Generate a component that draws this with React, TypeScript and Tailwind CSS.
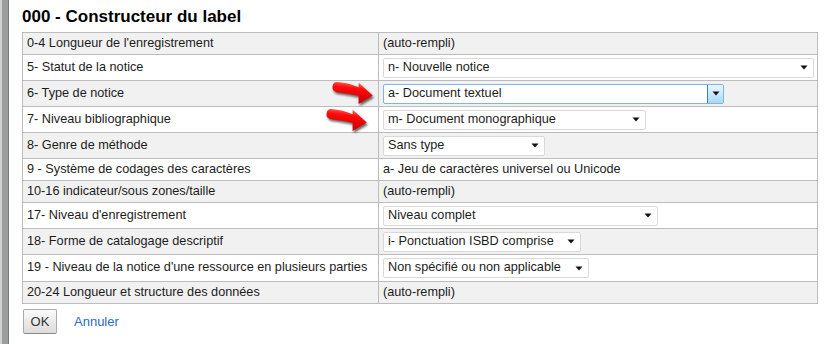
import React from "react";

type Row = {
  label: string;
  value?: string;
  select?: { text: string; width: string; focused?: boolean };
  arrow?: "a" | "b";
};

const rows: Row[] = [
  { label: "0-4 Longueur de l'enregistrement", value: "(auto-rempli)" },
  { label: "5- Statut de la notice", select: { text: "n- Nouvelle notice", width: "w-[431px]" } },
  { label: "6- Type de notice", select: { text: "a- Document textuel", width: "w-[341px]", focused: true }, arrow: "a" },
  { label: "7- Niveau bibliographique", select: { text: "m- Document monographique", width: "w-[263px]" }, arrow: "b" },
  { label: "8- Genre de méthode", select: { text: "Sans type", width: "w-[162px]" } },
  { label: "9 - Système de codages des caractères", value: "a- Jeu de caractères universel ou Unicode" },
  { label: "10-16 indicateur/sous zones/taille", value: "(auto-rempli)" },
  { label: "17- Niveau d'enregistrement", select: { text: "Niveau complet", width: "w-[275px]" } },
  { label: "18- Forme de catalogage descriptif", select: { text: "i- Ponctuation ISBD comprise", width: "w-[198px]" } },
  { label: "19 - Niveau de la notice d'une ressource en plusieurs parties", select: { text: "Non spécifié ou non applicable", width: "w-[206px]" } },
  { label: "20-24 Longueur et structure des données", value: "(auto-rempli)" },
];

function Caret() {
  return (
    <svg width="8" height="5" viewBox="0 0 8 5">
      <path d="M0.5 0.5 H7.5 L4 4.5 Z" fill="#111" />
    </svg>
  );
}

function Select({ text, width, focused }: { text: string; width: string; focused?: boolean }) {
  if (focused) {
    return (
      <div className={`${width} h-[20px] flex items-center bg-white border border-[#7eb4ea] rounded-[2px]`}>
        <span className="flex-1 pl-[4px] truncate">{text}</span>
        <div className="w-[16px] h-full flex items-center justify-center border-l border-[#3c7fb1] bg-gradient-to-b from-[#eaf6fd] to-[#a7d9f5] rounded-r-[1px]">
          <Caret />
        </div>
      </div>
    );
  }
  return (
    <div className={`${width} h-[20px] flex items-center bg-white border border-[#d9d9d9] rounded-[2px]`}>
      <span className="flex-1 pl-[4px] truncate">{text}</span>
      <div className="w-[16px] flex items-center justify-center pr-[2px]">
        <Caret />
      </div>
    </div>
  );
}

// red pointer arrow drawn on the screenshot
function RedArrow({ id }: { id: string }) {
  const d =
    "M4,2 C12,1.5 20,2.8 26,4.5 L25.5,0 L41,11 L28,21 L27,13 C20,12 12,12 5,12 Q0,11.5 0,7 Q0,2.5 4,2 Z";
  return (
    <svg width="46" height="27" viewBox="0 0 46 27">
      <defs>
        <linearGradient id={`g-${id}`} x1="0" y1="0" x2="0" y2="1">
          <stop offset="0" stopColor="#ff6a5a" />
          <stop offset="0.3" stopColor="#ff0a0a" />
          <stop offset="1" stopColor="#c40000" />
        </linearGradient>
        <filter id={`f-${id}`} x="-20%" y="-20%" width="140%" height="160%">
          <feGaussianBlur stdDeviation="1.1" />
        </filter>
      </defs>
      <g transform="translate(1 1) rotate(7 20 10)">
        <path d={d} transform="translate(1.5 2)" fill="#000" opacity="0.6" filter={`url(#f-${id})`} />
        <path d={d} fill={`url(#g-${id})`} />
      </g>
    </svg>
  );
}

export default function App() {
  return (
    <div className="w-[833px] h-[344px] flex bg-white text-[#1c1c1c] font-['Liberation_Sans',Arial,sans-serif] overflow-hidden">
      {/* window frame edge */}
      <div className="w-[2px] bg-[#d0d0d0]" />
      <div className="w-[6px] bg-[#9d9d9d]" />
      <div className="w-[1px] bg-[#6f7c84]" />

      <div className="pl-[13px] pt-[7px] flex flex-col">
        <div className="h-[20px] leading-[20px] text-[17px] font-bold text-black">
          000 - Constructeur du label
        </div>

        <table className="mt-[5px] w-[796px] table-fixed border border-[#bcbcbc] text-[12.7px]">
          <colgroup>
            <col className="w-[356px]" />
            <col />
          </colgroup>
          <tbody>
            {rows.map((r, i) => (
              <tr
                key={i}
                className={`${i % 2 === 0 ? "bg-[#f1f1f1]" : "bg-white"} ${r.select ? (i === 9 ? "h-[27px]" : "h-[26px]") : "h-[22px]"}`}
              >
                <td className="relative border border-[#bcbcbc] px-[4px] align-middle whitespace-nowrap">
                  {r.label}
                  {r.arrow === "a" && (
                    <div className="absolute right-[1px] top-[0px]">
                      <RedArrow id="a" />
                    </div>
                  )}
                  {r.arrow === "b" && (
                    <div className="absolute right-[7px] top-[1px]">
                      <RedArrow id="b" />
                    </div>
                  )}
                </td>
                <td className="border border-[#bcbcbc] px-[4px] align-middle whitespace-nowrap">
                  {r.select ? <Select {...r.select} /> : r.value}
                </td>
              </tr>
            ))}
          </tbody>
        </table>

        <div className="mt-[5px] ml-[1px] flex items-center gap-[17px] text-[13px]">
          <button className="w-[34px] h-[25px] border border-[#a9a9a9] border-b-[#8a8a8a] rounded-[2px] bg-gradient-to-b from-[#fbfbfb] to-[#dcdcdc] text-[#333]">
            OK
          </button>
          <a className="text-[#2a6bc2]">Annuler</a>
        </div>
      </div>
    </div>
  );
}
